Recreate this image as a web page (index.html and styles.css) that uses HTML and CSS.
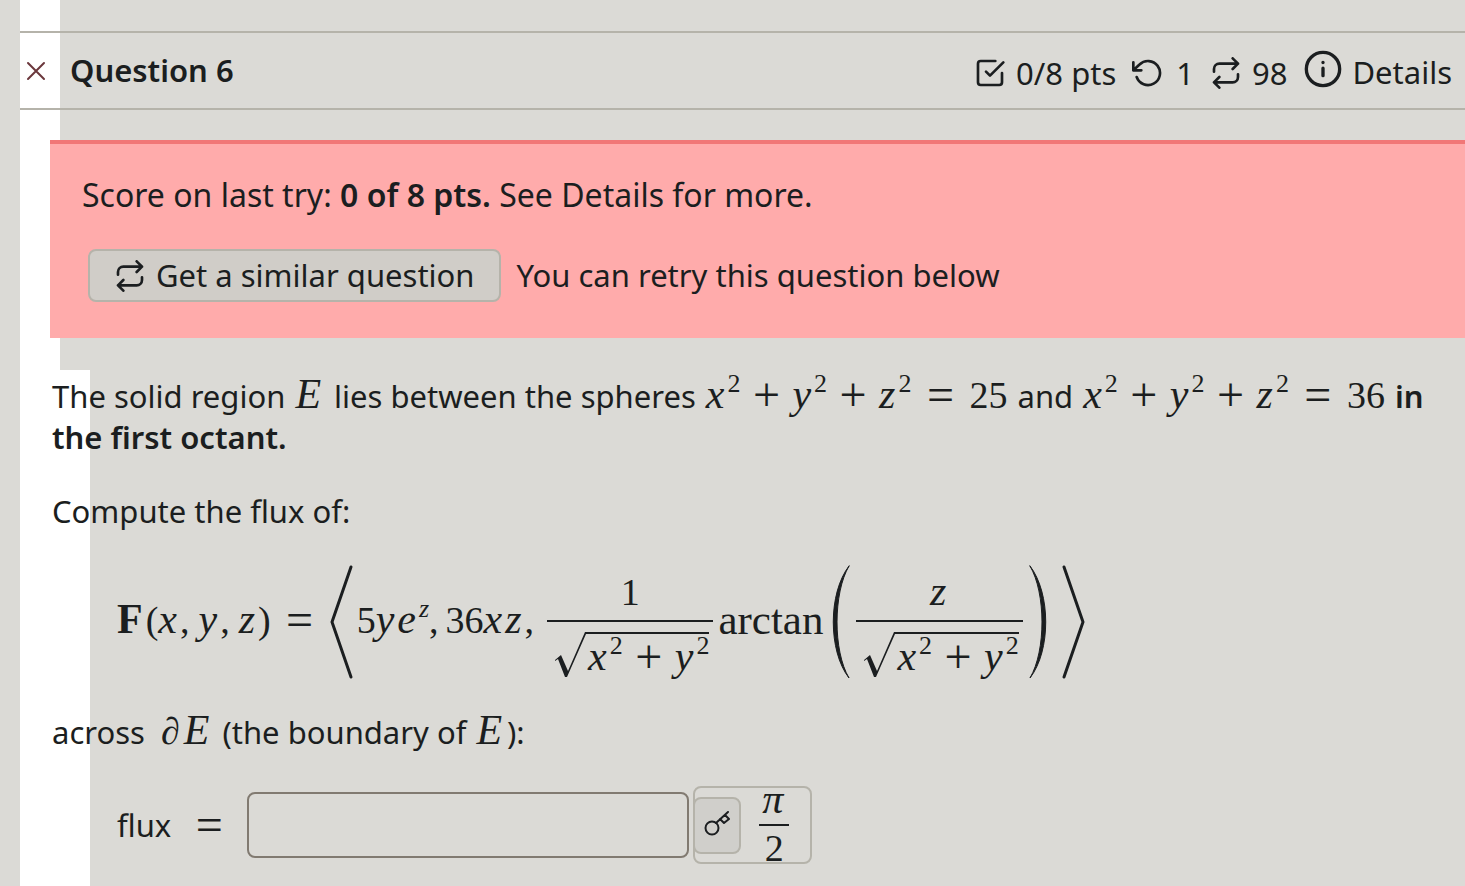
FILE: index.html
```
<!DOCTYPE html>
<html lang="en">

<head>
    <meta charset="UTF-8">
    <meta name="viewport" content="width=device-width, initial-scale=1.0">
    <title>Question 6</title>

    <link rel="stylesheet" href="styles.css">
</head>

<body>
    <!-- shared icon shapes -->
    <svg class="sprite" aria-hidden="true">
        <symbol id="repeat" viewBox="0 0 24 24">
            <path d="M17 1l4 4-4 4M3 11V9a4 4 0 0 1 4-4h14M7 23l-4-4 4-4M21 13v2a4 4 0 0 1-4 4H3" />
        </symbol>
        <symbol id="radical" viewBox="0 0 34 48">
            <path d="M1 28L7 23L14 39L31 0H34V2H32L13 45H11L4 27L1 29z" fill="currentColor" stroke="none" />
        </symbol>
    </svg>

    <main class="page">
        <div class="strip">
            <header class="question-header">
                <svg class="wrong" viewBox="0 0 20 20" role="img" aria-label="Incorrect">
                    <path d="M2 2l16 16M18 2L2 18" />
                </svg>
                <h2>Question 6</h2>
                <div class="info">
                    <span class="item">
                        <svg class="icon" viewBox="0 0 24 24">
                            <path d="M9 11l3 3L22 4M21 12v7a2 2 0 0 1-2 2H5a2 2 0 0 1-2-2V5a2 2 0 0 1 2-2h11" />
                        </svg>
                        0/8 pts
                    </span>
                    <span class="item tries">
                        <svg class="icon" viewBox="0 0 24 24">
                            <path d="M1 4v6h6M3.510 15a9 9 0 1 0 2.130-9.360L1 10" />
                        </svg>
                        1
                    </span>
                    <span class="item">
                        <svg class="icon"><use href="#repeat" /></svg>
                        98
                    </span>
                    <button type="button" class="details">
                        <svg class="icon big" viewBox="0 0 24 24">
                            <circle cx="12" cy="12" r="10" />
                            <path d="M12 11.500v4.500M12 8v.1" />
                        </svg>
                        Details
                    </button>
                </div>
            </header>

            <section class="score">
                <p>Score on last try: <strong>0 of 8 pts.</strong> See Details for more.</p>
                <div class="retry">
                    <button type="button" class="similar">
                        <svg class="icon"><use href="#repeat" /></svg>
                        Get a similar question
                    </button>
                    <span>You can retry this question below</span>
                </div>
            </section>
        </div>

        <section class="question">
            <p>
                The solid region <span class="math"><i>E</i></span> lies between the spheres
                <span class="math"><i>x</i><sup>2</sup><span class="op">+</span><i>y</i><sup>2</sup><span class="op">+</span><i>z</i><sup>2</sup><span class="op eq">=</span>25</span>
                and
                <span class="math"><i>x</i><sup>2</sup><span class="op">+</span><i>y</i><sup>2</sup><span class="op">+</span><i>z</i><sup>2</sup><span class="op eq">=</span>36</span>
                <strong>in<br>the first octant.</strong>
            </p>

            <p>Compute the flux of:</p>

            <div class="math formula">
                <span class="lhs"><b>F</b>(<i>x</i>,<i class="arg">y</i>,<i class="arg">z</i>)<span class="op eq">=</span></span>
                <svg class="angle" viewBox="0 0 24 114"><path d="M22 2L3 57l19 55" /></svg>
                <span class="terms">5<i>y</i><i>e</i><sup><i>z</i></sup>,<span class="term">36<i>x</i><i>z</i>,</span></span>
                <span class="frac">
                    <span class="top">1</span>
                    <span class="bottom"><svg class="root"><use href="#radical" /></svg><span class="under"><i>x</i><sup>2</sup><span class="op">+</span><i>y</i><sup>2</sup></span></span>
                </span>
                <span class="fn">arctan</span>
                <svg class="paren" viewBox="0 0 22 114"><path d="M20 1C-1 28-1 86 20 113C4 86 4 28 20 1z" /></svg>
                <span class="frac inner">
                    <span class="top"><i>z</i></span>
                    <span class="bottom"><svg class="root"><use href="#radical" /></svg><span class="under"><i>x</i><sup>2</sup><span class="op">+</span><i>y</i><sup>2</sup></span></span>
                </span>
                <svg class="paren" viewBox="0 0 22 114"><path d="M2 1C23 28 23 86 2 113C18 86 18 28 2 1z" /></svg>
                <svg class="angle last" viewBox="0 0 24 114"><path d="M2 2l19 55L2 112" /></svg>
            </div>

            <p>across <span class="math boundary">∂<i>E</i></span> (the boundary of <span class="math"><i>E</i></span>):</p>

            <div class="answer">
                <label for="flux">flux</label>
                <span class="math"><span class="op eq">=</span></span>
                <input type="text" id="flux">
                <div class="preview">
                    <button type="button" class="key" aria-label="Entry tips">
                        <svg viewBox="0 0 26 26">
                            <circle cx="8" cy="17" r="6.500" />
                            <path d="M12 12L24 1M21 4l4 4-5 4-4-4" />
                        </svg>
                    </button>
                    <span class="math small-frac"><span class="num"><i>π</i></span><span class="denom">2</span></span>
                </div>
            </div>
        </section>
    </main>
</body>

</html>
```
FILE: styles.css
```
*,
*::before,
*::after {
    margin: 0;
    padding: 0;
    box-sizing: border-box;
}

body {
    background-color: #dbdad6;
    color: #1b1e20;
    font-family: "Noto Sans", "Open Sans", sans-serif;
    font-size: 31px;
    line-height: 41px;
}

button,
input {
    font: inherit;
    color: inherit;
}

strong,
h2 {
    font-weight: 600;
}

svg {
    flex: none;
    fill: none;
    stroke: currentColor;
    stroke-linecap: round;
    stroke-linejoin: round;
}

.sprite {
    display: none;
}

.page {
    margin-left: 20px;
}

/* white strip down the left side */
.strip {
    padding: 31px 0 32px;
    background: linear-gradient(#fff, #fff) left / 40px 100% no-repeat;
}

.question-header {
    display: flex;
    align-items: center;
    height: 79px;
    padding: 0 13px 0 6px;
    border-top: 2px solid #b5b3aa;
    border-bottom: 2px solid #b5b3aa;
}

.question-header h2 {
    margin-left: 24px;
    font-size: 31px;
}

.wrong {
    width: 20px;
    height: 20px;
    color: #6b373c;
    stroke-width: 2;
}

.info {
    display: flex;
    align-items: center;
    gap: 16px;
    margin-left: auto;
}

.item,
.details {
    display: flex;
    align-items: center;
    gap: 10px;
}

.item {
    padding-top: 5px;
}

.tries {
    gap: 12px;
}

.details {
    gap: 9px;
    padding-top: 3px;
    border: none;
    background: transparent;
}

.icon {
    width: 32px;
    height: 32px;
    stroke-width: 2;
}

.icon.big {
    width: 40px;
    height: 40px;
    margin-bottom: 6px;
}

.score {
    margin: 30px 0 0 30px;
    padding: 30px 32px 36px;
    border-top: 4px solid #f17777;
    background-color: #ffabab;
}

.score p {
    font-size: 32px;
}

.retry {
    display: flex;
    align-items: center;
    gap: 16px;
    margin: 34px 0 0 6px;
}

.similar {
    display: flex;
    align-items: center;
    gap: 10px;
    height: 53px;
    padding: 0 24px;
    border: 2px solid #b5b3aa;
    border-radius: 8px;
    background-color: #d0cdc8;
}

.question {
    min-height: 516px;
    padding: 6px 32px 20px;
    background: linear-gradient(#fff, #fff) left / 70px 100% no-repeat;
}

.question p {
    margin-bottom: 33px;
}

/* math */
.math {
    font-family: "Liberation Serif", serif;
    font-size: 38px;
    line-height: 40px;
    white-space: nowrap;
}

p .math {
    margin: 0 2px;
    line-height: 0;
}

.math i,
.math b {
    margin-right: 3px;
    font-size: 42px;
    line-height: 0;
}

.math sup {
    font-size: 26px;
    line-height: 0;
    vertical-align: 16px;
}

.math sup i {
    margin: 0;
    font-size: 26px;
}

.op {
    display: inline-block;
    width: 52px;
    font-size: 48px;
    line-height: 0;
    text-align: center;
    vertical-align: -3px;
}

.eq {
    width: 58px;
}

.math.boundary {
    margin-left: 8px;
}

.boundary i {
    margin-left: 4px;
}

.formula {
    display: flex;
    align-items: center;
    height: 114px;
    margin: 32px 0 33px 65px;
}

.math .arg {
    margin-left: 9px;
}

.lhs,
.terms,
.fn {
    padding-bottom: 5px;
}

.fn {
    margin-right: 6px;
    font-size: 43px;
}

.term {
    margin-left: 7px;
}

.angle {
    width: 24px;
    height: 114px;
    margin-right: 4px;
    stroke-width: 3;
}

.angle.last {
    margin-left: 12px;
}

.paren {
    width: 22px;
    height: 114px;
    fill: currentColor;
    stroke-width: 1;
}

.frac {
    display: flex;
    flex-direction: column;
    margin: 0 5px 0 13px;
    text-align: center;
}

.frac.inner {
    margin-left: 5px;
}

.top {
    height: 56px;
    padding-top: 6px;
    border-bottom: 2px solid;
}

.bottom {
    display: flex;
    height: 56px;
    padding: 10px 4px 0 7px;
}

.root {
    width: 34px;
    height: 48px;
}

.under {
    align-self: flex-start;
    padding-top: 3px;
    border-top: 2px solid;
}

.answer {
    display: flex;
    align-items: center;
    padding-left: 65px;
}

.answer .math .op {
    width: 76px;
}

.answer input {
    width: 442px;
    height: 66px;
    padding: 0 12px;
    border: 2px solid #817a71;
    border-radius: 8px;
    background: transparent;
}

.preview {
    display: flex;
    align-items: center;
    height: 78px;
    margin-left: 4px;
    padding-right: 21px;
    border: 2px solid #b5b3aa;
    border-radius: 8px;
}

.key {
    width: 48px;
    height: 57px;
    margin-left: -2px;
    border: 2px solid #b5b3aa;
    border-radius: 8px;
    background-color: #d0cfcb;
}

.key svg {
    width: 26px;
    height: 26px;
    stroke-width: 2;
}

.small-frac {
    display: flex;
    flex-direction: column;
    width: 30px;
    margin-left: 18px;
    text-align: center;
}

.num {
    height: 36px;
    line-height: 24px;
}

.denom {
    height: 38px;
    border-top: 2px solid;
    line-height: 44px;
}
```
